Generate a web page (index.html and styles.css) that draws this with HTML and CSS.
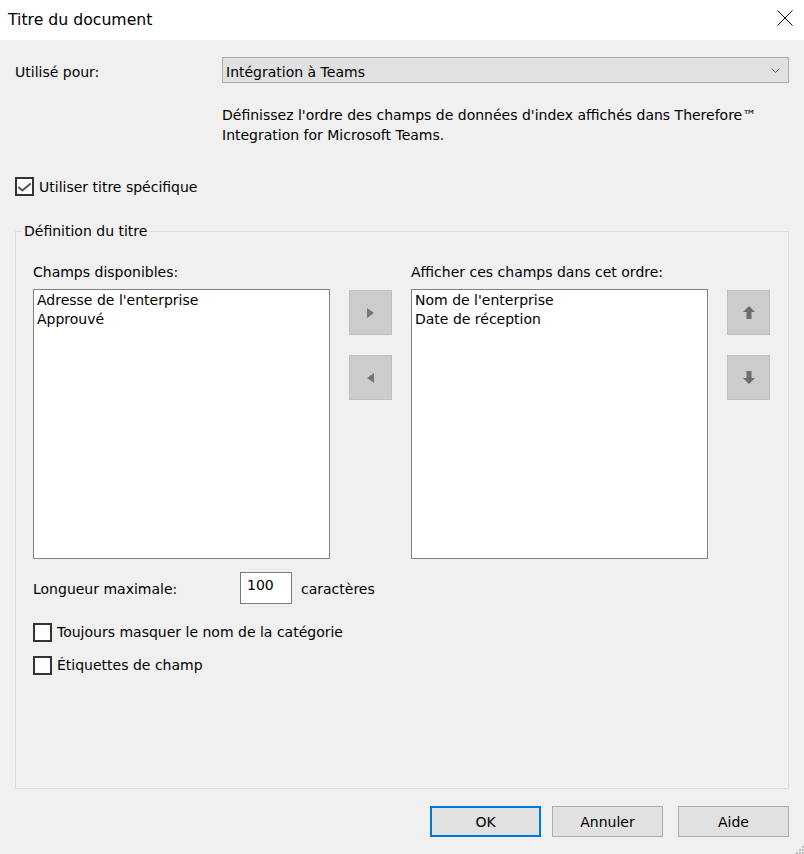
FILE: index.html
```html
<!DOCTYPE html>
<html lang="fr">
<head>
<meta charset="utf-8">
<title>Titre du document</title>
<link rel="stylesheet" href="styles.css">
</head>
<body>
<div class="window">
  <div class="titlebar">
    <span class="title">Titre du document</span>
    <svg class="close" width="16" height="16" viewBox="0 0 16 16"><path d="M0.5 0.5 L15.5 15.5 M15.5 0.5 L0.5 15.5" stroke="#000" stroke-width="1" fill="none"/></svg>
  </div>
  <div class="main">
    <div class="row-used">
      <span class="lbl-used">Utilisé pour:</span>
      <div class="select">
        <span>Intégration à Teams</span>
        <svg class="chev" width="9" height="5" viewBox="0 0 9 5"><path d="M0.5 0.5 L4.5 4.5 L8.5 0.5" stroke="#555" stroke-width="1" fill="none"/></svg>
      </div>
    </div>
    <p class="desc">Définissez l'ordre des champs de données d'index affichés dans Therefore™ Integration for Microsoft Teams.</p>
    <div class="check check-top">
      <span class="box"><svg width="15" height="15" viewBox="0 0 15 15"><path d="M1.3 8 L5.3 11.5 L13.7 4.5" stroke="#555" stroke-width="2" fill="none"/></svg></span>
      <span>Utiliser titre spécifique</span>
    </div>
    <fieldset class="group">
      <legend>Définition du titre</legend>
      <div class="lists">
        <div class="col-label">Champs disponibles:</div>
        <div></div>
        <div class="col-label">Afficher ces champs dans cet ordre:</div>
        <div></div>
        <ul class="listbox"><li>Adresse de l'enterprise</li><li>Approuvé</li></ul>
        <div class="btncol">
          <button class="arrow" type="button"><svg width="7" height="10" viewBox="0 0 7 10"><path d="M0 0 L7 5 L0 10 Z" fill="#777"/></svg></button>
          <button class="arrow" type="button"><svg width="7" height="10" viewBox="0 0 7 10"><path d="M7 0 L0 5 L7 10 Z" fill="#777"/></svg></button>
        </div>
        <ul class="listbox"><li>Nom de l'enterprise</li><li>Date de réception</li></ul>
        <div class="btncol">
          <button class="arrow" type="button"><svg width="12" height="13" viewBox="0 0 12 13"><path d="M6 0 L12 6 H8.5 V13 H3.5 V6 H0 Z" fill="#6d6d6d"/></svg></button>
          <button class="arrow" type="button"><svg width="12" height="13" viewBox="0 0 12 13"><path d="M6 13 L12 7 H8.5 V0 H3.5 V7 H0 Z" fill="#6d6d6d"/></svg></button>
        </div>
      </div>
      <div class="maxlen">
        <span class="lbl-max">Longueur maximale:</span>
        <span class="num">100</span>
        <span class="unit">caractères</span>
      </div>
      <div class="check check-a">
        <span class="box"></span>
        <span>Toujours masquer le nom de la catégorie</span>
      </div>
      <div class="check check-b">
        <span class="box"></span>
        <span>Étiquettes de champ</span>
      </div>
    </fieldset>
    <div class="actions">
      <button class="btn btn-default" type="button">OK</button>
      <button class="btn btn-cancel" type="button">Annuler</button>
      <button class="btn btn-help" type="button">Aide</button>
    </div>
  </div>
  <svg class="grip" width="10" height="10" viewBox="0 0 10 10" fill="#bdbdbd">
    <rect x="8" y="2" width="2" height="2"/>
    <rect x="5" y="5" width="2" height="2"/><rect x="8" y="5" width="2" height="2"/>
    <rect x="2" y="8" width="2" height="2"/><rect x="5" y="8" width="2" height="2"/><rect x="8" y="8" width="2" height="2"/>
  </svg>
</div>
</body>
</html>
```
FILE: styles.css
```css
html, body {
  margin: 0;
  padding: 0;
}
body {
  width: 804px;
  height: 854px;
  overflow: hidden;
  background: #f0f0f0;
  font-family: "DejaVu Sans", sans-serif;
  font-size: 14px;
  line-height: 20px;
  color: #000;
}
.window {
  position: relative;
  width: 804px;
  height: 854px;
}
.titlebar {
  height: 40px;
  background: #fff;
  display: flex;
  align-items: center;
  justify-content: space-between;
  padding: 0 11px 0 8px;
  box-sizing: border-box;
}
.title {
  font-size: 15.7px;
}
.close {
  align-self: flex-start;
  margin-top: 10px;
}
.main {
  padding: 17px 15px 0;
}
.row-used {
  display: flex;
  align-items: flex-start;
}
.lbl-used {
  width: 207px;
  padding-top: 5px;
}
.select {
  width: 567px;
  height: 26px;
  box-sizing: border-box;
  border: 1px solid #adadad;
  background: #e1e1e1;
  padding: 4px 8px 0 3px;
  display: flex;
  justify-content: space-between;
  align-items: flex-start;
}
.chev {
  margin-top: 6px;
}
.desc {
  margin: 22px 0 0 207px;
  width: 567px;
}
.check {
  display: flex;
  align-items: flex-start;
  gap: 5px;
}
.check-top {
  margin-top: 32px;
}
.box {
  width: 19px;
  height: 19px;
  box-sizing: border-box;
  border: 2px solid #333;
  background: #fff;
  display: flex;
  align-items: center;
  justify-content: center;
}
.check-a .box, .check-b .box {
  margin-top: 1.5px;
  height: 18.5px;
}
.check-a {
  margin-top: 17.5px;
}
.check-b {
  margin-top: 13px;
}
.group {
  margin: 24px 0 0;
  padding: 21px 0 0 17px;
  border: 1px solid #dcdcdc;
  width: 774px;
  height: 568px;
  box-sizing: border-box;
  min-width: 0;
}
.group legend {
  padding: 0 2px;
  margin-left: -11px;
  line-height: 20px;
}
.lists {
  display: grid;
  grid-template-columns: 297px 43px 297px 43px;
  column-gap: 19px;
  row-gap: 7px;
}
.listbox {
  margin: 0;
  padding: 1px 3px;
  list-style: none;
  height: 270px;
  box-sizing: border-box;
  border: 1px solid #828282;
  background: #fff;
  line-height: 19px;
}
.btncol {
  display: flex;
  flex-direction: column;
  gap: 20px;
  padding-top: 1px;
}
.arrow {
  width: 43px;
  height: 45px;
  box-sizing: border-box;
  background: #cccccc;
  border: 1px solid #bfbfbf;
  padding: 0;
  margin: 0;
  display: flex;
  align-items: center;
  justify-content: center;
}
.maxlen {
  display: flex;
  align-items: flex-start;
  margin-top: 13px;
}
.lbl-max {
  width: 207px;
  padding-top: 7px;
}
.num {
  width: 52px;
  height: 32px;
  box-sizing: border-box;
  border: 1px solid #7a7a7a;
  background: #fff;
  padding: 2px 0 0 6px;
}
.unit {
  margin-left: 9px;
  padding-top: 7px;
}
.actions {
  display: flex;
  justify-content: flex-end;
  margin-top: 17px;
}
.btn {
  width: 111px;
  height: 31px;
  box-sizing: border-box;
  border: 1px solid #adadad;
  background: #e1e1e1;
  font: inherit;
  line-height: 20px;
  color: #000;
  padding: 0;
  margin: 0;
}
.btn-default {
  border: 2px solid #0078d7;
}
.btn-cancel {
  margin-left: 11px;
}
.btn-help {
  margin-left: 15px;
}
.grip {
  position: absolute;
  right: 0;
  bottom: 0;
}
```
